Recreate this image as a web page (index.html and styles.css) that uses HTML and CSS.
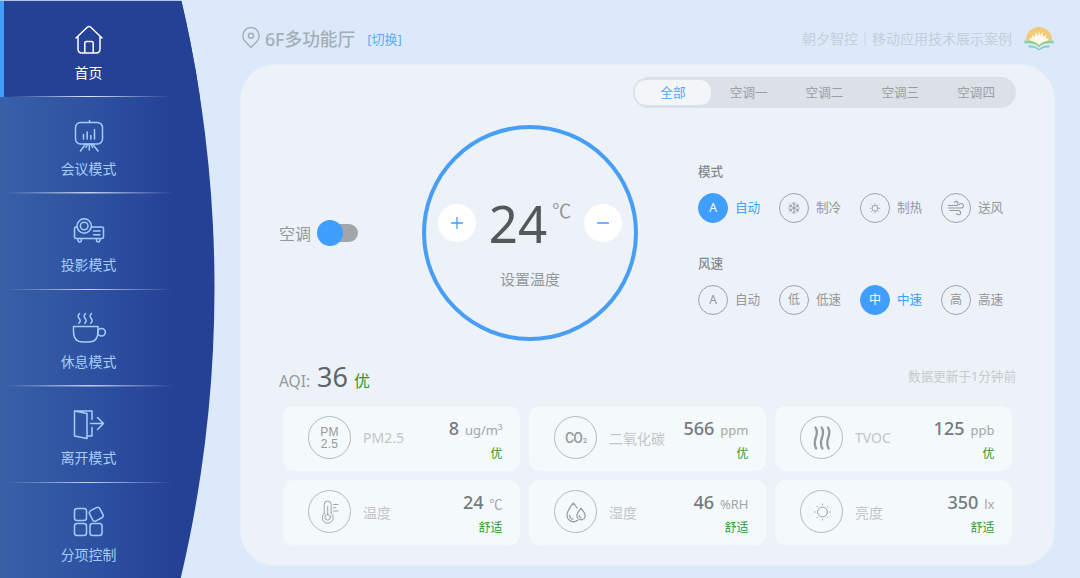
FILE: index.html
```html
<!DOCTYPE html>
<html lang="zh-CN">
<head>
    <meta charset="UTF-8">
    <title>智控面板</title>
    <link rel="stylesheet" href="styles.css">
</head>
<body>
    <div class="app">
        <nav class="sidebar">
            <a class="nav-item active">
                <svg class="nav-icon" viewBox="0 0 34 34"><path d="M4 16 15.500 5q1.500-1.200 3 0L30 16M6 14V27q0 4 4 4H24q4 0 4-4V14M12.800 31V21q0-1.500 1.500-1.500h5.400q1.500 0 1.500 1.500v10"/></svg>
                <span>首页</span>
            </a>
            <a class="nav-item">
                <svg class="nav-icon" viewBox="0 0 34 34"><rect x="3.500" y="4.500" width="27" height="21.500" rx="5"/><path d="M17.500 2.500v2M13.500 26 8.500 33M20.500 26l5.500 7M15.500 26.500l-1.500 3M19 26.500l1.500 3M17.300 26v6M11.500 16.500v4.500M15.200 14v7M18.800 17.500V21M22.500 11.500V21"/></svg>
                <span>会议模式</span>
            </a>
            <a class="nav-item">
                <svg class="nav-icon" viewBox="0 0 34 34"><circle cx="12.200" cy="12" r="7.200"/><circle cx="12.200" cy="12" r="3.800"/><path d="M5.500 13H4q-1.500 0-1.500 1.500V23q0 1.500 1.500 1.500H30q1.500 0 1.500-1.500v-8.500Q31.500 13 30 13H19.500M21.500 17H28M21.500 20.800H28M6 24.500v1.500q0 2 1.700 2t1.700-2v-1.500M24.500 24.500v1.500q0 2 1.700 2t1.700-2v-1.500"/></svg>
                <span>投影模式</span>
            </a>
            <a class="nav-item">
                <svg class="nav-icon" viewBox="0 0 34 34"><path d="M1.500 15.500h24.500v5q0 10.500-9.500 10.500h-5.500q-9.500 0-9.500-10.500zM7.500 2.500q-2.500 2.500-.300 5t-.500 4.800M13.500 2.500q-2.500 2.500-.300 5t-.500 4.800M19.500 2.500q-2.500 2.500-.300 5t-.500 4.800"/><circle cx="29.500" cy="21.200" r="3.800"/></svg>
                <span>休息模式</span>
            </a>
            <a class="nav-item">
                <svg class="nav-icon" viewBox="0 0 34 34"><path d="M2.500 4 15 6.500V31.500L2.500 29zM2.500 4H20v8.500M20 20.500V29h-5M18.500 16.500H31.500M25.500 10.500l6 6-6 6"/></svg>
                <span>离开模式</span>
            </a>
            <a class="nav-item">
                <svg class="nav-icon" viewBox="0 0 34 34"><rect x="2.500" y="4.500" width="12" height="12" rx="2.500"/><rect x="18.500" y="4.500" width="11.500" height="11.500" rx="2.500" transform="rotate(-28 24.200 10.200)"/><rect x="2.500" y="19.500" width="12" height="12" rx="2.500"/><rect x="18" y="19.500" width="12" height="12" rx="2.500"/></svg>
                <span>分项控制</span>
            </a>
        </nav>

        <main class="main">
            <header class="header">
                <svg class="pin" viewBox="0 0 20 22"><path d="M10 20.500 4.200 14.500A8.200 8.200 0 1 1 15.800 14.500z"/><circle cx="10" cy="8.800" r="2.500"/></svg>
                <span class="room">6F多功能厅</span>
                <a class="switch-room">[切换]</a>
                <span class="brand">朝夕智控｜移动应用技术展示案例</span>
                <svg class="logo" viewBox="0 0 30 27">
                    <path d="M2 15A13 13 0 1 1 28 15Q19 16 15 20 11 16 2 15z" fill="#f2c879"/>
                    <path d="M6 15.500 5.500 13l3 .500L7.500 9.500l3.300 2.500L11.500 7l2.500 4L15 5.500l1 5.500 2.500-4 .700 5 3.300-2.500-1 4 3-.500-.500 2.500Q18 17 15 20 12 17 6 15.500z" fill="#fffbe8"/>
                    <path d="M.500 15.500Q11 15 15 20.500 19 15 29.500 15.500V18.500Q19 17.500 15 22.500 11 17.500.500 18.500z" fill="#8ed09a"/>
                    <path d="M4 20.500Q11 20 15 24 19 20 26 20.500L25 22.500Q19 22 15 25.500 11 22 5 22.500z" fill="#8cc9bd"/>
                </svg>
            </header>

            <section class="panel">
                <div class="tabs">
                    <span class="tab active">全部</span>
                    <span class="tab">空调一</span>
                    <span class="tab">空调二</span>
                    <span class="tab">空调三</span>
                    <span class="tab">空调四</span>
                </div>

                <div class="control">
                    <div class="power">
                        <span>空调</span>
                        <div class="toggle"><div class="knob"></div></div>
                    </div>

                    <div class="dial">
                        <div class="dial-row">
                            <button class="round-btn"><svg viewBox="0 0 12 12"><path d="M6 .500v11M.500 6h11"/></svg></button>
                            <div class="temp"><span class="temp-value">24</span><span class="temp-unit">℃</span></div>
                            <button class="round-btn"><svg viewBox="0 0 12 12"><path d="M.500 6h11"/></svg></button>
                        </div>
                        <div class="dial-label">设置温度</div>
                    </div>

                    <div class="options">
                        <h3>模式</h3>
                        <div class="option-row">
                            <div class="option active"><i>A</i><span>自动</span></div>
                            <div class="option"><i><svg viewBox="0 0 14 14"><path d="M7 1.500v11M2.200 4.200l9.600 5.600M2.200 9.800l9.600-5.600M5.400 2.200 7 3.700l1.600-1.500M5.400 11.800 7 10.300l1.600 1.500M2 6.200l2.200-.800-.400-2.300M12 7.800l-2.200.800.400 2.300M2 7.800l2.200.800-.400 2.300M12 6.200l-2.200-.800.400-2.300"/></svg></i><span>制冷</span></div>
                            <div class="option"><i><svg viewBox="0 0 14 14"><circle cx="7" cy="7.300" r="2.900"/><path d="M7 2.600v.500M7 11.500v.500M2.300 7.300h.500M11.200 7.300h.500M3.600 3.900l.400.400M10 10.300l.400.400M10.400 3.900l-.400.400M4 10.300l-.400.400"/></svg></i><span>制热</span></div>
                            <div class="option"><i><svg class="wind" viewBox="0 0 14 14"><path d="M0 4.800h7q1.800 0 1.800-1.800T7.200 1.200q-1.500 0-1.700 1.200M0 7h11.500q2 0 2-2t-1.900-2q-1.500 0-1.800 1.200M1.500 9.200H9q2 0 2 1.900t-1.800 1.900q-1.300 0-1.700-1.200"/></svg></i><span>送风</span></div>
                        </div>
                        <h3>风速</h3>
                        <div class="option-row">
                            <div class="option"><i>A</i><span>自动</span></div>
                            <div class="option"><i>低</i><span>低速</span></div>
                            <div class="option active"><i>中</i><span>中速</span></div>
                            <div class="option"><i>高</i><span>高速</span></div>
                        </div>
                    </div>
                </div>

                <div class="aqi">
                    <span class="aqi-name">AQI:</span>
                    <span class="aqi-value">36</span>
                    <span class="aqi-level">优</span>
                    <span class="updated">数据更新于1分钟前</span>
                </div>

                <div class="cards">
                    <div class="card">
                        <div class="card-icon pm"><span>PM</span><span>2.5</span></div>
                        <span class="card-name">PM2.5</span>
                        <div class="reading"><div><b>8</b><small>ug/m³</small></div><em>优</em></div>
                    </div>
                    <div class="card">
                        <div class="card-icon co"><span>CO</span><sub>2</sub></div>
                        <span class="card-name">二氧化碳</span>
                        <div class="reading"><div><b>566</b><small>ppm</small></div><em>优</em></div>
                    </div>
                    <div class="card">
                        <div class="card-icon"><svg class="thick" viewBox="0 0 24 24"><path d="M5.500 1.500q2.500 4 .300 10t.300 11M11.700 1.500q2.500 4 .300 10t.300 11M18 1.500q2.500 4 .300 10t.300 11"/></svg></div>
                        <span class="card-name">TVOC</span>
                        <div class="reading"><div><b>125</b><small>ppb</small></div><em>优</em></div>
                    </div>
                    <div class="card">
                        <div class="card-icon"><svg viewBox="0 0 24 24"><path d="M6.200 13.500V4.500a3.500 3.500 0 0 1 7 0v9a5.500 5.500 0 1 1-7 0zM9.700 6.500v8M15.500 4.500h4.500M15.500 7.800h2.500M15.500 11h4.500"/><circle cx="9.700" cy="17.300" r="2.800"/></svg></div>
                        <span class="card-name">温度</span>
                        <div class="reading"><div><b>24</b><small class="cjk">℃</small></div><em>舒适</em></div>
                    </div>
                    <div class="card">
                        <div class="card-icon"><svg class="drops" viewBox="0 0 24 24"><path d="M13.700 20.300A6.600 6.600 0 0 1 3 15.300Q3 10.500 9.300 3.200q2.200 2.300 3.800 4.800M17 8.500q4.200 4.500 4.200 7.200a4.100 4.100 0 0 1-8.300 0q0-2.700 4.100-7.200zM5.500 15q.200 3.500 3.500 4.200M15 15.500q.200 2 2 2.300"/></svg></div>
                        <span class="card-name">湿度</span>
                        <div class="reading"><div><b>46</b><small>%RH</small></div><em>舒适</em></div>
                    </div>
                    <div class="card">
                        <div class="card-icon"><svg viewBox="0 0 24 24"><circle cx="12.500" cy="12" r="4.900"/><path d="M12.500 4v.900M12.500 19.100V20M4.500 12h.900M19.600 12h.900M6.900 6.400l.600.600M17.500 17l.600.600M18.100 6.400l-.600.600M7.500 17l-.600.600"/></svg></div>
                        <span class="card-name">亮度</span>
                        <div class="reading"><div><b>350</b><small>lx</small></div><em>舒适</em></div>
                    </div>
                </div>
            </section>
        </main>
    </div>
</body>
</html>
```
FILE: styles.css
```css
:root {
    --blue: #409eff;
    --gray: #95989b;
    --green: #2c9a2c;
}

* {
    box-sizing: border-box;
}

body {
    margin: 0;
    font-family: "Noto Sans", "Noto Sans CJK SC", sans-serif;
    background: #dce9f9;
    color: var(--gray);
    overflow: hidden;
}

svg {
    fill: none;
    stroke: currentColor;
    stroke-linecap: round;
    stroke-linejoin: round;
}

.app {
    display: flex;
    width: 1080px;
    height: 578px;
}

/* sidebar */
.sidebar {
    width: 215px;
    height: 578px;
    background: linear-gradient(90deg, #3860a7 0, #2d50a0 100px, #244195 175px);
    clip-path: circle(1263px at -1048.5px 288px);
    border-top: 1px solid #b5c5e2;
}

.nav-item {
    display: flex;
    flex-direction: column;
    align-items: center;
    width: 177px;
    height: 96.5px;
    padding-top: 20.5px;
    font-size: 13.9px;
    line-height: 20px;
    color: #a5cdfb;
    background: linear-gradient(90deg, transparent 3%, rgba(220, 230, 250, 0.85) 50%, transparent 98%) bottom / 100% 1.5px no-repeat;
}

.nav-item:last-child {
    background: none;
}

.nav-item.active {
    width: 215px;
    height: 96px;
    padding-right: 42px;
    color: #fff;
    border-left: 4px solid var(--blue);
    background: linear-gradient(90deg, transparent 2%, #dfe7f7 40%, transparent 79%) bottom / 100% 1.5px no-repeat, #244195;
}

.nav-icon {
    width: 34px;
    height: 34px;
    margin-bottom: 7px;
    stroke-width: 1.5;
}

/* header */
.main {
    flex: 1;
    padding: 0 26px;
}

.header {
    display: flex;
    align-items: center;
    height: 65px;
    padding-top: 11px;
}

.pin {
    width: 20px;
    height: 22px;
    margin-right: 4px;
    stroke: #a3aeba;
    stroke-width: 1.4;
}

.room {
    font-size: 17.7px;
    font-weight: 500;
    color: #a3aeba;
}

.switch-room {
    margin-left: 12px;
    font-size: 13px;
    color: #62aafa;
}

.brand {
    margin-left: auto;
    font-size: 14px;
    color: #c3cfdc;
}

.logo {
    width: 30px;
    height: 27px;
    margin-left: 12px;
    stroke: none;
}

/* panel */
.panel {
    width: 813px;
    height: 500px;
    padding: 12px 38px 0;
    border-radius: 34px;
    background: #ecf2f8;
    box-shadow: 0 0 2px #f4f9fe;
}

.tabs {
    display: flex;
    width: 383px;
    height: 31px;
    margin-left: auto;
    padding: 3px 2px;
    border-radius: 16px;
    background: #dce1e7;
}

.tab {
    flex: 1;
    text-align: center;
    font-size: 12.6px;
    line-height: 25px;
    color: #999fa5;
}

.tab.active {
    border-radius: 11px;
    color: #55a5fb;
    background: #f3f6f8;
}

.control {
    display: flex;
    align-items: center;
    height: 249px;
}

.power {
    display: flex;
    align-items: center;
    flex: none;
    width: 143px;
    font-size: 16px;
}

.toggle {
    width: 38px;
    height: 18px;
    margin-left: 9px;
    border-radius: 9px;
    background: #a2a5aa;
}

.knob {
    width: 26px;
    height: 26px;
    margin: -4px 0 0 -3px;
    border-radius: 50%;
    background: var(--blue);
}

.dial {
    flex: none;
    width: 216px;
    height: 216px;
    padding-top: 70px;
    border: 4px solid #489ef5;
    border-radius: 50%;
    text-align: center;
}

.dial-row {
    display: flex;
    align-items: center;
    justify-content: space-between;
    height: 48px;
    padding: 0 12px;
}

.round-btn {
    display: flex;
    align-items: center;
    justify-content: center;
    width: 38px;
    height: 38px;
    padding: 0;
    border: 0;
    border-radius: 50%;
    background: #fff;
    color: var(--blue);
}

.round-btn svg {
    width: 12px;
    height: 12px;
    stroke-width: 1.3;
}

.temp {
    display: flex;
    line-height: 50px;
}

.temp-value {
    font-size: 51px;
    color: #55585b;
}

.temp-unit {
    margin-left: 5px;
    font-family: "Noto Sans CJK SC", sans-serif;
    font-size: 19px;
    line-height: 24px;
}

.dial-label {
    margin-top: 20px;
    font-size: 15px;
    line-height: 24px;
}

.options {
    flex: none;
    width: 324px;
    margin-top: 13px;
    margin-left: 60px;
}

.options h3 {
    margin: 0 0 12px;
    font-size: 12.6px;
    font-weight: 500;
    line-height: 18px;
    color: #85898d;
}

.option-row {
    display: flex;
}

.option-row + h3 {
    margin-top: 32px;
}

.option {
    display: flex;
    align-items: center;
    width: 81px;
    font-size: 12.6px;
    line-height: 16px;
}

.option i {
    display: flex;
    align-items: center;
    justify-content: center;
    width: 30px;
    height: 30px;
    margin-right: 7px;
    border: 1px solid #a0a3a6;
    border-radius: 50%;
    font-style: normal;
    font-size: 12px;
}

.option svg {
    width: 14px;
    height: 14px;
    stroke-width: 0.9;
}

.option .wind {
    width: 16px;
    height: 16px;
}

.option.active {
    color: var(--blue);
}

.option.active i {
    border-color: var(--blue);
    background: var(--blue);
    color: #fff;
}

/* air quality */
.aqi {
    display: flex;
    align-items: baseline;
    height: 49px;
    line-height: 40px;
}

.aqi-name {
    font-size: 15.5px;
}

.aqi-value {
    margin-left: 7px;
    font-size: 27px;
    color: #606468;
}

.aqi-level {
    margin-left: 6px;
    font-size: 16px;
    color: var(--green);
}

.updated {
    align-self: flex-start;
    margin-left: auto;
    font-size: 12.6px;
    color: #c7cacd;
}

.cards {
    display: grid;
    grid-template-columns: repeat(3, 237px);
    grid-auto-rows: 64.5px;
    gap: 9.5px 9px;
    margin-left: 4px;
}

.card {
    display: flex;
    align-items: center;
    padding: 0 17.5px 0 25px;
    border-radius: 11px;
    background: #f4f9fb;
}

.card-icon {
    display: flex;
    align-items: center;
    justify-content: center;
    width: 43px;
    height: 43px;
    margin-top: -1px;
    border: 1px solid #b6b9bb;
    border-radius: 50%;
    color: #96999b;
}

.card-icon svg {
    width: 24px;
    height: 24px;
    stroke-width: 0.9;
}

.card-icon .thick {
    stroke-width: 2.3;
}

.card-icon .drops {
    stroke-width: 1.2;
}

.pm {
    flex-direction: column;
    font: 400 12px/12px "Liberation Sans", sans-serif;
    letter-spacing: 0.2px;
}

.co {
    font: 500 14px/16px Roboto, sans-serif;
    letter-spacing: -1px;
}

.co sub {
    margin-left: 1px;
    font-size: 7px;
    line-height: 7px;
    align-self: center;
    padding-top: 7px;
}

.card-name {
    margin-top: -1px;
    margin-left: 12px;
    font-size: 14px;
    color: #c3c5c7;
}

.reading {
    margin-left: auto;
    padding-top: 1px;
    text-align: right;
}

.reading b {
    font-size: 18px;
    font-weight: 500;
    line-height: 26px;
    color: #777a7d;
}

.reading small {
    margin-left: 6px;
    font-size: 13px;
    color: #a3a6aa;
}

.reading .cjk {
    font-family: "Noto Sans CJK SC", sans-serif;
    line-height: 1;
}

.reading em {
    display: block;
    margin-top: 4px;
    font-size: 12px;
    font-style: normal;
    line-height: 18px;
    color: var(--green);
}
```
